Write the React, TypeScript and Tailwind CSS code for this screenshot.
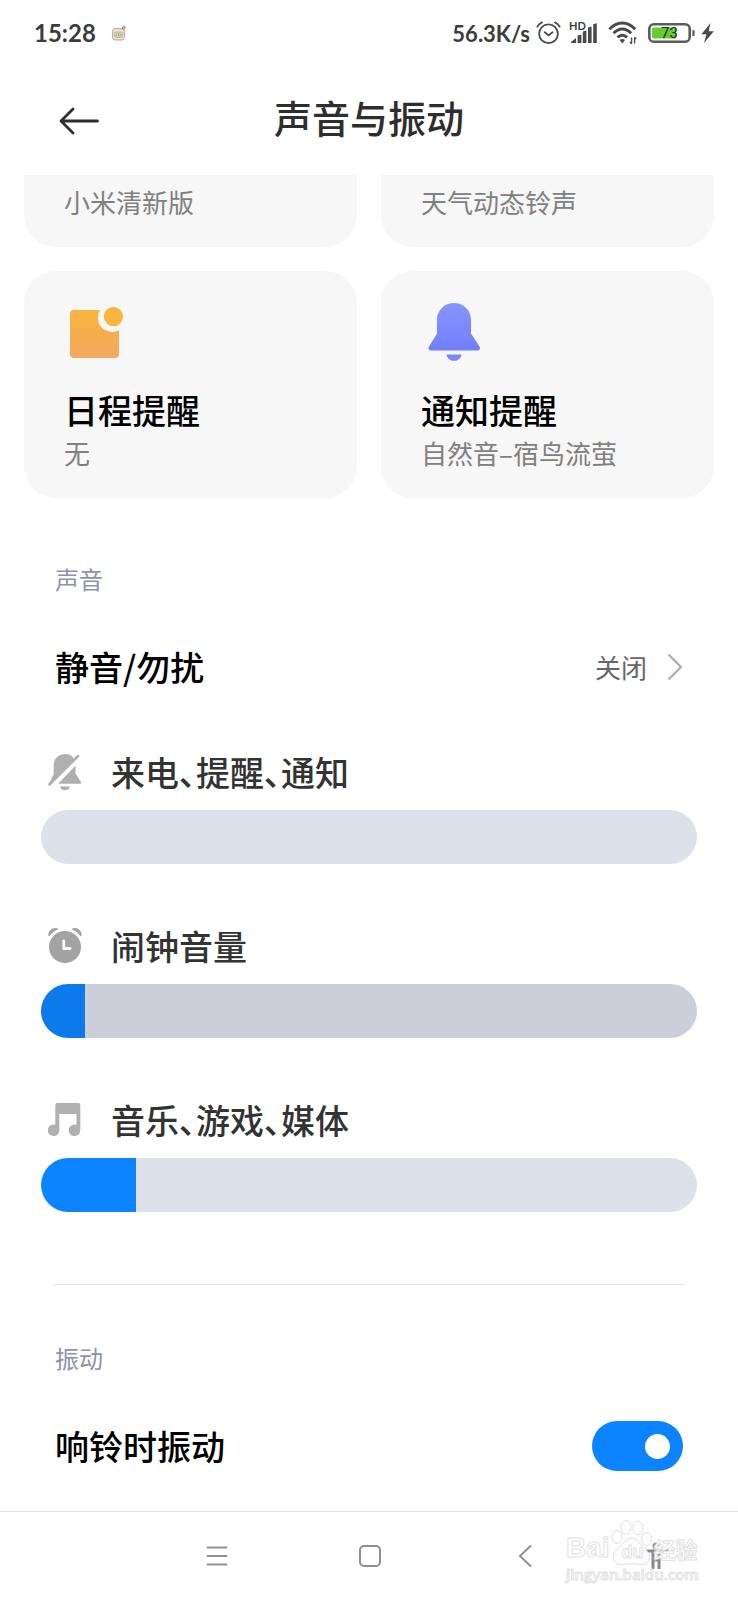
import React, { useState } from 'react';

const StatusBar = () => (
  <div className="flex h-[66px] items-center justify-between pl-[34px] pr-6 text-[#3c3c3c]">
    <div className="flex items-center gap-4">
      <span className="font-[Lato] text-2xl font-bold">15:28</span>
      <svg width="14" height="15" viewBox="0 0 14 15" fill="none">
        <rect x="0.6" y="2.6" width="11.8" height="11.4" rx="2.5" fill="#f6ded2" stroke="#b98f84" strokeWidth="0.8" />
        <rect x="2.4" y="6" width="8.4" height="5.4" rx="1.6" fill="#c9e3b8" stroke="#a3a68c" strokeWidth="0.7" />
        <path d="M4.5 7.5v2.4M6.6 7v3.4M8.7 7.5v2.4" stroke="#7fb568" strokeWidth="0.9" />
        <circle cx="11.8" cy="1.8" r="1.3" fill="#e8dccf" stroke="#6b5a55" strokeWidth="0.8" />
      </svg>
    </div>
    <div className="flex items-center">
      <span className="mr-1.5 font-[Lato] text-[22px] font-bold">56.3K/s</span>
      {/* Alarm */}
      <svg className="mr-2" width="25" height="24" viewBox="0 0 25 24" fill="none" stroke="#4a4a4a" strokeWidth="1.8" strokeLinecap="round">
        <circle cx="12.5" cy="12.8" r="9.4" />
        <path d="M8.8 11.2l3.7 3.2 4-3.2M1.4 5.6C2.4 3.8 4 2.3 6 1.4M23.6 5.6C22.6 3.8 21 2.3 19 1.4" />
      </svg>
      {/* Signal */}
      <div className="relative mr-2.5 h-6 w-[29px]">
        <span className="absolute -top-px left-0 font-[Lato] text-[11px] font-bold leading-[12px]">HD</span>
        <svg width="29" height="24" viewBox="0 0 29 24" fill="#4a4a4a">
          <path d="M2 21l5-4v5H2zM8.6 14.5l3.8-1V22H8.6zM13.8 10.5l3.6-1V22h-3.6zM19 6.5l3.6-1V22H19zM24.2 3.2l3.6-1V22h-3.6z" />
        </svg>
      </div>
      {/* Wifi */}
      <svg className="mr-2.5" width="30" height="24" viewBox="0 0 30 24" fill="none" stroke="#4a4a4a" strokeWidth="3">
        <path d="M1.4 8.2C9-0.2 19.6-0.2 27.2 8.2" />
        <path d="M5.6 12.2c5.3-5.6 12-5.6 17.4 0" />
        <path d="M9.6 16.4c2.9-3 6.5-3 9.4 0" />
        <path d="M11.6 19c1.7-1.5 3.7-1.5 5.4 0l-2.7 3.4z" fill="#4a4a4a" stroke="none" />
        <path d="M23.6 16.5v6M26.6 16.5v6M22 20.8l1.6 2M28.2 18.2l-1.6-2" strokeWidth="1.3" />
      </svg>
      {/* Battery */}
      <div className="relative mr-1.5 flex h-5 w-[47px] items-center">
        <svg className="absolute inset-0" width="47" height="20" viewBox="0 0 47 20">
          <rect x="1.3" y="1.3" width="40.4" height="17.4" rx="4.5" fill="#fff" stroke="#5b5b60" strokeWidth="2.6" />
          <path d="M6 4.5h22v11H6a2 2 0 0 1-2-2v-7a2 2 0 0 1 2-2z" fill="#66cc33" />
          <path d="M44.4 7h1a1.2 1.2 0 0 1 1.2 1.2v3.6a1.2 1.2 0 0 1-1.2 1.2h-1z" fill="#5b5b60" />
        </svg>
        <span className="relative w-[43px] text-center font-[Roboto] text-[15px] leading-5 text-[#1f2b1a]">73</span>
      </div>
      <svg width="13" height="20" viewBox="0 0 13 20" fill="#4a4a4a">
        <path d="M9.6 0L0.4 11.2h5L3 20l9.8-11.8H7.6z" />
      </svg>
    </div>
  </div>
);

const CalendarIcon = () => (
  <svg width="64" height="64" viewBox="0 0 64 64">
    <defs>
      <linearGradient id="calendar" x1="0" y1="0" x2="0" y2="1">
        <stop offset="0" stopColor="#f9b53d" />
        <stop offset="1" stopColor="#f3a860" />
      </linearGradient>
    </defs>
    <path
      d="M10 11H36.2A14.2 14.2 0 0 0 55 31.2V55a4 4 0 0 1-4 4H10a4 4 0 0 1-4-4V15a4 4 0 0 1 4-4z"
      fill="url(#calendar)"
    />
    <circle cx="49.4" cy="17.6" r="9.6" fill="#f9b53d" />
  </svg>
);

const BellIcon = () => (
  <svg width="64" height="64" viewBox="0 0 64 64">
    <defs>
      <linearGradient id="bell" x1="0" y1="0" x2="0" y2="1">
        <stop offset="0" stopColor="#8794ff" />
        <stop offset="1" stopColor="#727ffb" />
      </linearGradient>
    </defs>
    <path
      d="M33 4c-9.6 0-17 7.4-17 17V34.5L7.9 47.8C6.8 49.6 7.9 51.5 10 51.5H56.5c2.1 0 3.2-1.9 2.1-3.7L50 34.5V21C50 11.4 42.6 4 33 4z"
      fill="url(#bell)"
    />
    <path d="M25.5 55.5h15c-0.6 4-3.6 6.3-7.5 6.3s-6.9-2.3-7.5-6.3z" fill="#7b88f7" />
  </svg>
);

const MutedIcon = () => (
  <svg width="34" height="38" viewBox="0 0 34 38" fill="#b0b0b0">
    <path d="M1.2 30.5L5.7 21V12C5.7 5.8 10.7 1 17 1c3 0 5.7 1 7.6 2.8L26 7 4 29z" />
    <path d="M27.5 12.5v8l5.3 8.2c.8 1.2.3 2.1-.9 2.1H10.2z" />
    <path d="M12 33.5h10c-.5 2.3-2.4 3.7-5 3.7s-4.5-1.4-5-3.7z" />
    <path d="M1.6 31.2L29.8 3.2" stroke="#b0b0b0" strokeWidth="2.8" strokeLinecap="round" />
  </svg>
);

const ClockIcon = () => (
  <svg width="34" height="38" viewBox="0 0 34 38" fill="none">
    <circle cx="17" cy="20" r="16" fill="#a3a3a3" />
    <path d="M15.8 14v7.5h6.2" stroke="#fff" strokeWidth="2.8" strokeLinecap="round" strokeLinejoin="round" />
    <path d="M0.3 8.2C0 4 4.5 0 9 1.300L10.600 2.300C6.700 3.700 3.700 6 1.300 9.500zM33.700 8.200C34 4 29.500 0 25 1.300L23.400 2.300C27.300 3.700 30.300 6 32.700 9.500z" fill="#a3a3a3" />
  </svg>
);

const MusicIcon = () => (
  <svg width="34" height="38" viewBox="0 0 34 38" fill="#b0b0b0">
    <path d="M9.5 2h20.5a2.3 2.3 0 0 1 2.3 2.3V29a5.8 5.8 0 1 1-3.8-5.2V13H11.3V29a5.8 5.8 0 1 1-4-5.2V4.3a2.3 2.3 0 0 1 2.2-2.3z" />
  </svg>
);

interface RingtoneCardProps {
  icon: React.ReactNode;
  title: string;
  subtitle: string;
}

const RingtoneCard = ({ icon, title, subtitle }: RingtoneCardProps) => (
  <button className="flex flex-col items-start rounded-[32px] bg-[#f7f7f7] px-10 pb-[27px] pt-7 text-left">
    {icon}
    <span className="mt-[25px] text-[34px] font-medium leading-[44px] text-black">{title}</span>
    <span className="mt-[3px] text-[26px] leading-9 text-[#808080]">{subtitle}</span>
  </button>
);

interface VolumeSliderProps {
  id: string;
  label: string;
  icon: React.ReactNode;
  initial: number;
  fill?: string;
  track?: string;
}

const VolumeSlider = ({ id, label, icon, initial, fill = '#0d84ff', track = '#dde1ea' }: VolumeSliderProps) => {
  const [value, setValue] = useState(initial);
  const percent = value / 10;

  return (
    <div>
      <label htmlFor={id} className="flex h-11 items-center gap-[29px] pl-[7px] text-[34px] font-medium leading-[44px] text-[#333]">
        {icon}
        <span className="[font-feature-settings:'palt']">{label}</span>
      </label>
      <input
        id={id}
        type="range"
        min={0}
        max={1000}
        value={value}
        onChange={(e) => setValue(Number(e.target.value))}
        className="mt-4 block h-[54px] w-full appearance-none rounded-full [&::-webkit-slider-thumb]:h-[54px] [&::-webkit-slider-thumb]:w-px [&::-webkit-slider-thumb]:appearance-none [&::-webkit-slider-thumb]:opacity-0"
        style={{ background: `linear-gradient(to right, ${fill} ${percent}%, ${track} ${percent}%)` }}
      />
    </div>
  );
};

const Watermark = () => (
  <div className="pointer-events-none absolute right-10 top-2 w-[132px] select-none text-white opacity-90 [-webkit-text-stroke:1px_#e0e0e0]">
    <div className="flex h-11 items-end">
      <span className="font-['Liberation_Sans'] text-[28px] font-bold leading-8">Bai</span>
      <div className="relative h-11 w-11 shrink-0">
        <svg width="44" height="46" viewBox="0 0 44 46" fill="#fff" stroke="#dcdcdc" strokeWidth="1">
          <ellipse cx="7" cy="17" rx="5" ry="6.5" />
          <ellipse cx="16" cy="7.5" rx="5" ry="6.8" />
          <ellipse cx="28" cy="8" rx="5" ry="6.8" />
          <ellipse cx="36.5" cy="19" rx="5" ry="6.5" />
          <path d="M21.5 18c-5 0-7 4-10.5 8-4.5 4-8.5 7-7.5 12.5 1 5 5 6.5 9 6 3-.4 6-.8 9-.8s6 .4 9 .8c4 .5 8-1 9-6 1-5.500-3-8.500-7.500-12.500-3.500-4-5.500-8-10.500-8z" />
        </svg>
        <span className="absolute bottom-0.5 left-3 font-['Liberation_Sans'] text-lg font-bold leading-5">du</span>
      </div>
      <span className="shrink-0 text-[22px] font-bold leading-8">经验</span>
    </div>
    <div className="font-['Open_Sans'] text-[15px] font-semibold leading-5">jingyan.baidu.com</div>
  </div>
);

const App = () => {
  const [vibrate, setVibrate] = useState(true);

  return (
    <div className="min-h-screen w-full overflow-hidden bg-white font-['Noto_Sans_CJK_SC',sans-serif]">
      <StatusBar />

      {/* Title bar */}
      <header className="grid h-[109px] grid-cols-[1fr_auto_1fr] items-center px-[59px]">
        <button aria-label="返回" className="justify-self-start">
          <svg width="41" height="28" viewBox="0 0 41 28" fill="none" stroke="#2e2e2e" strokeWidth="2.8" strokeLinecap="round" strokeLinejoin="round">
            <path d="M38.500 14H2M14 2L2 14l12 12" />
          </svg>
        </button>
        <h1 className="pb-2 text-[38px] font-medium leading-[48px] text-[#2e2e2e]">声音与振动</h1>
      </header>

      <main>
        {/* Ringtones */}
        <div className="grid grid-cols-2 gap-6 px-6">
          <button className="rounded-b-[32px] bg-[#f7f7f7] px-10 pb-[27px] pt-[9px] text-left text-[26px] leading-9 text-[#808080]">
            小米清新版
          </button>
          <button className="rounded-b-[32px] bg-[#f7f7f7] px-10 pb-[27px] pt-[9px] text-left text-[26px] leading-9 text-[#808080]">
            天气动态铃声
          </button>
          <RingtoneCard icon={<CalendarIcon />} title="日程提醒" subtitle="无" />
          <RingtoneCard icon={<BellIcon />} title="通知提醒" subtitle="自然音–宿鸟流萤" />
        </div>

        {/* Sound */}
        <section className="pt-[63px]">
          <h2 className="px-[55px] text-2xl leading-9 text-[#8c93ad]">声音</h2>
          <button className="mt-[30px] flex h-20 w-full items-center justify-between px-[55px] text-left">
            <span className="text-[34px] font-medium leading-[44px] text-black">静音/勿扰</span>
            <span className="flex items-center gap-5 text-[26px] leading-9 text-[#666]">
              关闭
              <svg width="16" height="28" viewBox="0 0 16 28" fill="none" stroke="#adadad" strokeWidth="2.2">
                <path d="M1.5 1.5L14 14 1.5 26.5" />
              </svg>
            </span>
          </button>
          <div className="mt-[43px] flex flex-col gap-[60px] px-[41px]">
            <VolumeSlider id="ring" label="来电、提醒、通知" icon={<MutedIcon />} initial={0} />
            <VolumeSlider id="alarm" label="闹钟音量" icon={<ClockIcon />} initial={67} fill="#0d7aeb" track="#cccfd9" />
            <VolumeSlider id="media" label="音乐、游戏、媒体" icon={<MusicIcon />} initial={145} />
          </div>
        </section>

        <hr className="mx-[54px] mt-[72px] border-[#e4e4e4]" />

        {/* Vibration */}
        <section className="pb-[25px] pt-[55px]">
          <h2 className="px-[55px] text-2xl leading-9 text-[#8c93ad]">振动</h2>
          <div className="mt-[30px] flex h-20 items-center justify-between px-[55px]">
            <label htmlFor="vibrate" className="text-[34px] font-medium leading-[44px] text-black">响铃时振动</label>
            <input
              id="vibrate"
              type="checkbox"
              role="switch"
              checked={vibrate}
              onChange={(e) => setVibrate(e.target.checked)}
              className="flex h-[50px] w-[91px] appearance-none items-center rounded-full bg-gray-300 px-[13px] before:h-[25px] before:w-[25px] before:rounded-full before:bg-white checked:justify-end checked:bg-[#0d84ff]"
            />
          </div>
        </section>
      </main>

      {/* System navigation */}
      <footer className="relative flex h-[89px] items-center border-t border-[#e2e2e2] pl-[19%]">
        <nav className="grid flex-1 grid-cols-3 justify-items-center">
          <button aria-label="最近任务">
            <svg width="24" height="24" viewBox="0 0 24 24" stroke="#909090" strokeWidth="1.8" strokeLinecap="round">
              <path d="M2.5 3.5h19M2.5 12h19M2.5 20.5h19" />
            </svg>
          </button>
          <button aria-label="主屏幕">
            <svg width="24" height="24" viewBox="0 0 24 24" fill="none" stroke="#909090" strokeWidth="2">
              <rect x="2" y="2" width="20" height="20" rx="4" />
            </svg>
          </button>
          <button aria-label="返回上一级">
            <svg width="24" height="24" viewBox="0 0 24 24" fill="none" stroke="#909090" strokeWidth="2" strokeLinecap="round">
              <path d="M18.500 2L8 12l10.500 10" />
            </svg>
          </button>
        </nav>
        <div className="w-[23%] pl-[42px]">
          <button aria-label="无障碍" className="block">
            <svg width="26" height="28" viewBox="0 0 26 28" fill="none" stroke="#8a8a8a">
              <circle cx="13" cy="4" r="2.5" strokeWidth="2" />
              <path d="M0.5 9h25" strokeWidth="3" />
              <path d="M10 9v18M16 9v18M10 18h6" strokeWidth="3" />
            </svg>
          </button>
        </div>
        <Watermark />
      </footer>
    </div>
  );
};

export default App;
